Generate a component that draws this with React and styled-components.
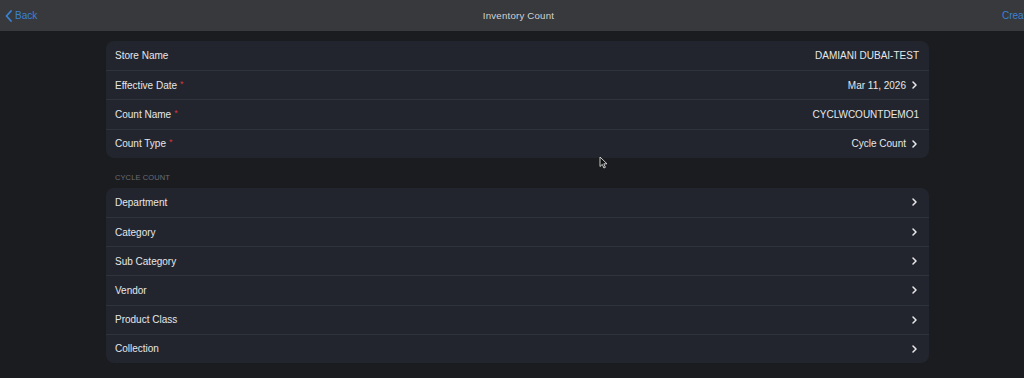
import React from "react";
import styled, { createGlobalStyle } from "styled-components";

const GlobalStyle = createGlobalStyle`
  html, body {
    margin: 0;
    padding: 0;
    background: #1b1c20;
    overflow: hidden;
  }
  body {
    font-family: "Liberation Sans", Arial, sans-serif;
    -webkit-font-smoothing: antialiased;
  }
`;

const Screen = styled.div`
  position: relative;
  width: 1035px;
  height: 378px;
  background: #1b1c20;
  overflow: hidden;
`;

const NavBar = styled.div`
  height: 31px;
  background: #37393c;
  display: grid;
  grid-template-columns: 1fr auto 1fr;
  align-items: center;
  padding: 0 3px 0 5px;
  box-sizing: border-box;
`;

const NavButton = styled.button`
  background: none;
  border: none;
  padding: 0;
  color: #3b82d4;
  font-family: inherit;
  font-size: 10px;
  display: flex;
  align-items: center;
  gap: 3px;
  justify-self: ${(p) => (p.$right ? "end" : "start")};
  cursor: pointer;
`;

const Title = styled.div`
  color: #d2d3d5;
  font-size: 9.7px;
  letter-spacing: 0.2px;
`;

const Content = styled.div`
  padding: 10px 106px 0;
  display: flex;
  flex-direction: column;
`;

const Card = styled.div`
  background: #22252d;
  border-radius: 8px;
  overflow: hidden;
`;

const Row = styled.div`
  height: 29.2px;
  display: flex;
  align-items: center;
  justify-content: space-between;
  padding: 0 10px 0 9px;
  border-top: ${(p) => (p.$first ? "none" : "1px solid #2f333b")};
  box-sizing: border-box;
`;

const Label = styled.span`
  color: #e6e7e9;
  font-size: 10px;
`;

const Required = styled.span`
  color: #d8343c;
  font-size: 9px;
  margin-left: 3px;
  position: relative;
  top: -2px;
`;

const Value = styled.span`
  display: flex;
  align-items: center;
  gap: 6px;
  color: #e6e7e9;
  font-size: 10px;
  margin-right: ${(p) => (p.$chevron ? "2px" : "0")};
`;

const SectionHeader = styled.div`
  color: #6a6d74;
  font-size: 7.5px;
  line-height: 9px;
  letter-spacing: 0.1px;
  padding: 15px 9px 6px;
`;

const Cursor = styled.svg`
  position: absolute;
  left: 599px;
  top: 156px;
`;

const Chevron = () => (
  <svg width="5" height="8" viewBox="0 0 5 8">
    <path d="M1 1l3 3-3 3" fill="none" stroke="#e8e8ea" strokeWidth="1.5" strokeLinecap="round" strokeLinejoin="round" />
  </svg>
);

const BackChevron = () => (
  <svg width="7" height="12" viewBox="0 0 7 12">
    <path d="M6 1L1.5 6 6 11" fill="none" stroke="#3b82d4" strokeWidth="1.8" strokeLinecap="round" strokeLinejoin="round" />
  </svg>
);

const general = [
  { label: "Store Name", value: "DAMIANI DUBAI-TEST" },
  { label: "Effective Date", value: "Mar 11, 2026", required: true, chevron: true },
  { label: "Count Name", value: "CYCLWCOUNTDEMO1", required: true },
  { label: "Count Type", value: "Cycle Count", required: true, chevron: true },
];

const filters = ["Department", "Category", "Sub Category", "Vendor", "Product Class", "Collection"];

export default function App() {
  return (
    <Screen>
      <GlobalStyle />
      <NavBar>
        <NavButton>
          <BackChevron />
          Back
        </NavButton>
        <Title>Inventory Count</Title>
        <NavButton $right>Create</NavButton>
      </NavBar>
      <Content>
        <Card>
          {general.map((item, i) => (
            <Row key={item.label} $first={i === 0}>
              <Label>
                {item.label}
                {item.required && <Required>*</Required>}
              </Label>
              <Value $chevron={item.chevron}>
                {item.value}
                {item.chevron && <Chevron />}
              </Value>
            </Row>
          ))}
        </Card>
        <SectionHeader>CYCLE COUNT</SectionHeader>
        <Card>
          {filters.map((f, i) => (
            <Row key={f} $first={i === 0}>
              <Label>{f}</Label>
              <Value $chevron>
                <Chevron />
              </Value>
            </Row>
          ))}
        </Card>
      </Content>
      <Cursor width="9" height="13" viewBox="0 0 9 13">
        <path d="M1 1v9.5l2.3-2.1 1.6 3.6 1.5-.7-1.6-3.5H8z" fill="#111" stroke="#ddd" strokeWidth="0.9" strokeLinejoin="round" />
      </Cursor>
    </Screen>
  );
}
